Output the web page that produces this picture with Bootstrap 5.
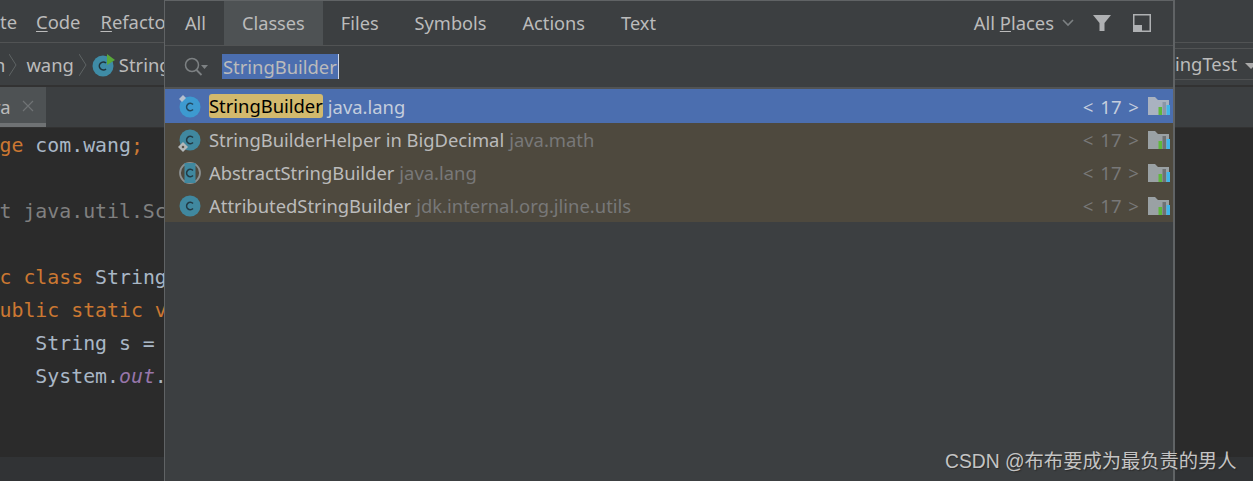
<!DOCTYPE html>
<html lang="en">
<head>
<meta charset="utf-8">
<title>Search Everywhere</title>
<link href="https://cdn.jsdelivr.net/npm/bootstrap@5.3.0/dist/css/bootstrap.min.css" rel="stylesheet">
<style>
html,body{height:481px;overflow:hidden;background:#3c3f41;}
body{font-family:"Noto Sans",sans-serif;color:#bbb;font-size:18.4px;position:relative;width:1253px;}
.ide{height:481px;}
.menubar{height:43px;border-bottom:1px solid #515354;padding-top:1px;line-height:42px;white-space:nowrap;}
.menubar span{margin-right:20px;}
.menubar span:first-child{margin-right:19px;}
.menubar u{text-underline-offset:2px;}
.crumbs{height:42px;white-space:nowrap;padding-top:1px;}
.cut-n{margin-left:-6px;}
.sep-a{margin:0 9px 0 4px;}
.sep-b{margin:0 5px 0 5px;}
.crumb-ico{margin-right:3px;}
.combo{height:32px;border-top:1px solid #515354;border-bottom:1px solid #515354;margin-top:4px;width:78px;flex:none;line-height:30px;}
.caret-d{width:0;height:0;border-left:6px solid transparent;border-right:6px solid transparent;border-top:6px solid #aaa;display:inline-block;margin-left:8px;vertical-align:2px;}
.tabstrip{height:42px;border-top:2px solid #323232;}
.filetab{width:46px;height:40px;background:#4e5254;border-bottom:4px solid #6f7274;line-height:40px;overflow:hidden;}
.cut-ra{margin-left:-7px;}
.tab-x{margin:13px 12px 0 0;}
.editor{height:330px;background:#2b2b2b;border-top:1px solid #323232;padding-top:1px;font-family:"DejaVu Sans Mono",monospace;font-size:19.85px;line-height:33px;color:#a9b7c6;white-space:pre;}
.code-lines{margin-left:-.5px;}
.codekw{color:#cc7832;}
.codedim{color:#808080;}
.codeout{color:#9876aa;font-style:italic;}
.footer-strip{height:24px;background:#313335;}
.popup{position:absolute;left:164px;top:0;width:1011px;height:481px;background:#3c3f41;border:1px solid #606365;border-right-width:2px;border-bottom:0;}
.tabs-row{height:45px;border-bottom:1px solid #515354;}
.sw-tab{padding:0 18px;line-height:44px;font-size:18.2px;}
.sw-tab:first-child{padding-left:20px;}
.sw-tab:last-of-type{padding-left:19px;}
.sw-tab.sel{background:#4e5254;}
.place-sel{line-height:44px;}
.search-row{height:43px;border-bottom:2px solid #515354;padding-left:18px;}
.hit-input{background:#4b6eaf;color:#bbb;height:25px;line-height:25px;padding:0 1px;margin-left:13px;border-right:1px solid #cfd8ea;}
.result{height:33px;padding-left:12px;padding-right:3px;background:#4e493e;white-space:nowrap;}
.result.sel{background:#4b6eaf;height:34px;}
.txt-main{padding-top:1px;}
.hl{background:#d2b96d;color:#000;border-radius:3px;line-height:24px;display:inline-block;}
.loc{color:#787878;margin-left:5px;padding-top:1px;}
.sel .loc{color:#c4cddd;}
.ver{color:#787878;margin-right:9px;padding-top:1px;word-spacing:2px;font-size:18.6px;}
.sel .ver{color:#c4cddd;}
.ico{flex:none;margin-right:8px;}
.chev{margin-left:8px;}
.funnel{margin-left:18px;}
.dock{margin:0 22px 0 21px;}
.wm{position:absolute;left:945px;top:448px;font-family:"Liberation Sans","Noto Sans CJK SC",sans-serif;font-size:19.3px;line-height:28px;color:#c4c4c4;text-shadow:1px 1px 1px #2a2a2a;white-space:nowrap;}
</style>
</head>
<body>
<div class="ide d-flex flex-column">
  <div class="menubar d-flex"><span>te</span><span><u>C</u>ode</span><span><u>R</u>efactor</span></div>
  <div class="crumbs d-flex justify-content-between">
    <div class="d-flex align-items-center">
      <span class="cut-n">n</span>
      <svg class="sep-a" width="8" height="26" viewBox="0 0 8 26" fill="none"><path d="M0 2l7 11-7 11" stroke="#5f6364" stroke-width="1"/></svg>
      <span>wang</span>
      <svg class="sep-b" width="8" height="26" viewBox="0 0 8 26" fill="none"><path d="M0 2l7 11-7 11" stroke="#5f6364" stroke-width="1"/></svg>
      <svg class="crumb-ico" width="24" height="24" viewBox="0 0 24 24"><circle cx="11" cy="13" r="10.500" fill="#3f8ca6"/><path d="M14 10a4 4 0 1 0 0 6" fill="none" stroke="#20343c" stroke-width="1.600"/><path d="M15 1l8 6-8 5z" fill="#59a83a"/></svg>
      <span>String</span>
    </div>
    <div class="combo">ingTest<i class="caret-d"></i></div>
  </div>
  <div class="tabstrip d-flex"><div class="filetab d-flex align-items-start justify-content-between"><span class="cut-ra">ra</span><svg class="tab-x" width="12" height="12" viewBox="0 0 12 12"><path d="M1 1l10 10M11 1L1 11" stroke="#6f7375" stroke-width="1.200"/></svg></div></div>
  <div class="editor"><div class="code-lines"><span class="codekw">ge</span> com.wang<span class="codekw">;</span>

<span class="codedim">t java.util.Scanner;</span>

<span class="codekw">c class</span> StringTest {
<span class="codekw">ublic static void</span>
   String s = 
   System.<span class="codeout">out</span>.</div></div>
  <div class="footer-strip"></div>
</div>

<div class="popup d-flex flex-column">
  <div class="tabs-row d-flex align-items-start flex-none">
    <div class="sw-tab">All</div>
    <div class="sw-tab sel">Classes</div>
    <div class="sw-tab">Files</div>
    <div class="sw-tab">Symbols</div>
    <div class="sw-tab">Actions</div>
    <div class="sw-tab">Text</div>
    <div class="ms-auto d-flex align-items-center place-sel">
      <span>All <u>P</u>laces</span>
      <svg class="chev" width="12" height="8" viewBox="0 0 12 8" fill="none"><path d="M1 1l5 5 5-5" stroke="#7d8183" stroke-width="1.600"/></svg>
      <svg class="funnel" width="20" height="20" viewBox="0 0 20 20"><path d="M1 2h18l-6.500 8v8h-5v-8z" fill="#afb1b3"/></svg>
      <svg class="dock" width="18" height="18" viewBox="0 0 18 18"><path d="M.75.75h16.500v16.500H.75z" fill="none" stroke="#afb1b3" stroke-width="1.500"/><path d="M1 11h8v6H1z" fill="#afb1b3"/></svg>
    </div>
  </div>
  <div class="search-row d-flex align-items-center">
    <svg width="26" height="22" viewBox="0 0 26 22" fill="none"><circle cx="9" cy="9" r="6.500" stroke="#7d8183" stroke-width="1.500"/><path d="M13.500 14l5 5" stroke="#7d8183" stroke-width="1.800"/><path d="M18 9h7l-3.500 4z" fill="#7d8183"/></svg>
    <span class="hit-input">StringBuilder</span>
  </div>
  <div class="result sel d-flex align-items-center">
    <svg class="ico" width="24" height="24" viewBox="0 0 24 24"><circle cx="13" cy="13" r="10.500" fill="#3d9ad0"/><path d="M16 10.500a3.700 3.700 0 1 0 0 5" fill="none" stroke="#234a60" stroke-width="1.500"/><path d="M2 5l4-4 3 3-4 4z" fill="#b5bfcf"/></svg>
    <span class="hl">StringBuilder</span><span class="loc">java.lang</span>
    <span class="ver ms-auto">&lt; 17 &gt;</span>
    <svg width="22" height="18" viewBox="0 0 22 18"><path d="M0 0h7l3 3h11v15H0z" fill="#a9b2c0"/><path d="M10.500 10h3.500v8h-3.500z" fill="#5fb83c"/><path d="M14.500 5h3.500v13h-3.500z" fill="#8b96a6"/><path d="M18.500 8H22v10h-3.500z" fill="#3fb5ea"/></svg>
  </div>
  <div class="result d-flex align-items-center">
    <svg class="ico" width="24" height="24" viewBox="0 0 24 24"><circle cx="13" cy="12" r="10.500" fill="#40889f"/><path d="M16 9.500a3.700 3.700 0 1 0 0 5" fill="none" stroke="#223a44" stroke-width="1.500"/><path d="M6 14l5 5-5 5-5-5z" fill="#b4b8b9"/><path d="M6 17.500l1.500 1.500L6 20.500 4.500 19z" fill="#4e493e"/></svg>
    <span class="txt-main">StringBuilderHelper in BigDecimal</span><span class="loc">java.math</span>
    <span class="ver ms-auto">&lt; 17 &gt;</span>
    <svg width="22" height="18" viewBox="0 0 22 18"><path d="M0 0h7l3 3h11v15H0z" fill="#9aa1a4"/><path d="M10.500 10h3.500v8h-3.500z" fill="#5fb83c"/><path d="M14.500 5h3.500v13h-3.500z" fill="#6f7273"/><path d="M18.500 8H22v10h-3.500z" fill="#3fb5ea"/></svg>
  </div>
  <div class="result d-flex align-items-center">
    <svg class="ico" width="24" height="24" viewBox="0 0 24 24"><circle cx="13" cy="12" r="10" fill="none" stroke="#8c9091" stroke-width="1.800"/><path d="M7.500 2h11v20h-11z" fill="#40889f"/><path d="M16 9.500a3.700 3.700 0 1 0 0 5" fill="none" stroke="#223a44" stroke-width="1.500"/></svg>
    <span class="txt-main">AbstractStringBuilder</span><span class="loc">java.lang</span>
    <span class="ver ms-auto">&lt; 17 &gt;</span>
    <svg width="22" height="18" viewBox="0 0 22 18"><path d="M0 0h7l3 3h11v15H0z" fill="#9aa1a4"/><path d="M10.500 10h3.500v8h-3.500z" fill="#5fb83c"/><path d="M14.500 5h3.500v13h-3.500z" fill="#6f7273"/><path d="M18.500 8H22v10h-3.500z" fill="#3fb5ea"/></svg>
  </div>
  <div class="result d-flex align-items-center">
    <svg class="ico" width="24" height="24" viewBox="0 0 24 24"><circle cx="13" cy="12" r="10.500" fill="#40889f"/><path d="M16 9.500a3.700 3.700 0 1 0 0 5" fill="none" stroke="#223a44" stroke-width="1.500"/></svg>
    <span class="txt-main">AttributedStringBuilder</span><span class="loc">jdk.internal.org.jline.utils</span>
    <span class="ver ms-auto">&lt; 17 &gt;</span>
    <svg width="22" height="18" viewBox="0 0 22 18"><path d="M0 0h7l3 3h11v15H0z" fill="#9aa1a4"/><path d="M10.500 10h3.500v8h-3.500z" fill="#5fb83c"/><path d="M14.500 5h3.500v13h-3.500z" fill="#6f7273"/><path d="M18.500 8H22v10h-3.500z" fill="#3fb5ea"/></svg>
  </div>
</div>
<div class="wm">CSDN @布布要成为最负责的男人</div>
<script src="https://cdn.jsdelivr.net/npm/bootstrap@5.3.0/dist/js/bootstrap.bundle.min.js"></script>
</body>
</html>
